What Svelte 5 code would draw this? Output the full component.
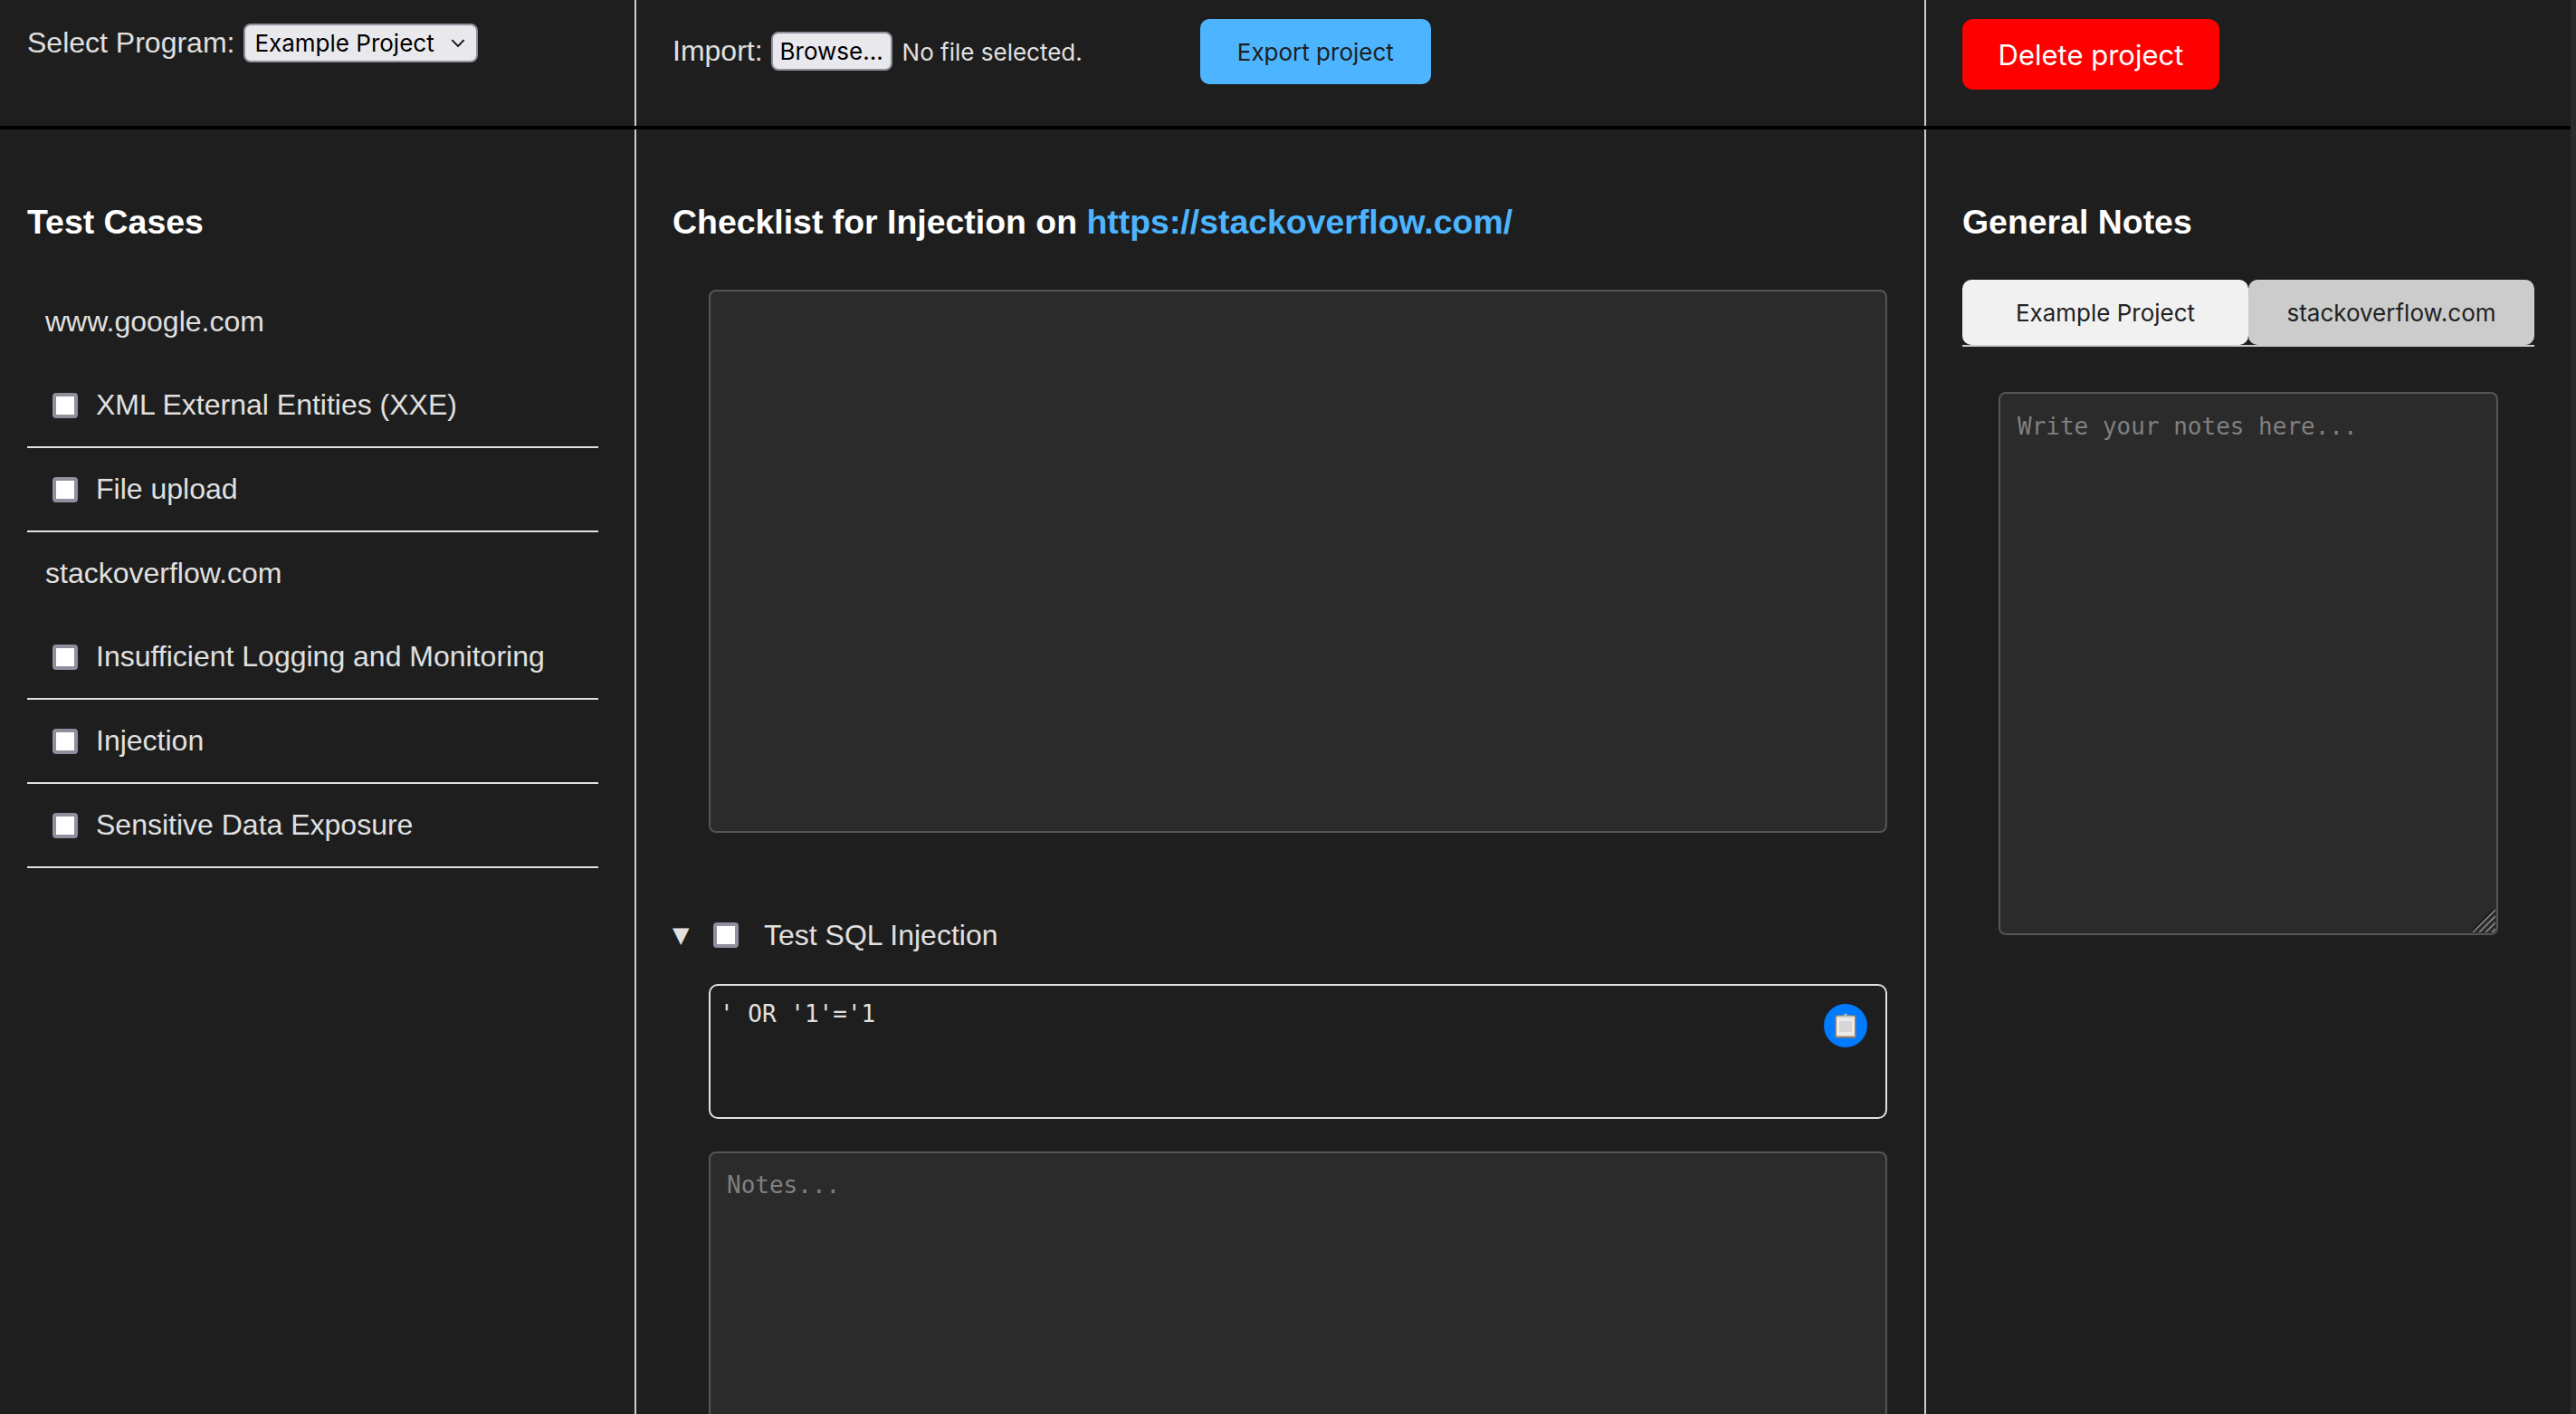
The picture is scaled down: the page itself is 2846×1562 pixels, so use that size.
<script>
  const sections = [
    { host: 'www.google.com', items: ['XML External Entities (XXE)', 'File upload'] },
    { host: 'stackoverflow.com', items: ['Insufficient Logging and Monitoring', 'Injection', 'Sensitive Data Exposure'] }
  ];
</script>

<div class="page">
  <div class="content">
    <header class="top">
      <div class="cell left">
        <label class="program" for="program">Select Program:</label>
        <span class="select-wrap">
          <select id="program"><option>Example Project</option></select>
          <svg class="chevron" viewBox="0 0 12 8" aria-hidden="true"><path d="M1 1.5 6 6.5 11 1.5" fill="none" stroke="#111" stroke-width="1.4"/></svg>
        </span>
      </div>
      <div class="cell middle">
        <span class="import">Import:</span>
        <button class="browse">Browse...</button>
        <span class="nofile">No file selected.</span>
        <button class="export">Export project</button>
      </div>
      <div class="cell right">
        <button class="delete">Delete project</button>
      </div>
    </header>

    <main class="columns">
      <section class="col left">
        <h3>Test Cases</h3>
        <div class="list">
          {#each sections as s}
            <div class="host">{s.host}</div>
            {#each s.items as item}
              <label class="item"><input type="checkbox" /><span>{item}</span></label>
            {/each}
          {/each}
        </div>
      </section>

      <section class="col middle">
        <h3>Checklist for Injection on <a href="#top">https://stackoverflow.com/</a></h3>
        <textarea class="desc" readonly></textarea>
        <div class="check">
          <span class="caret">▼</span>
          <input type="checkbox" />
          <span>Test SQL Injection</span>
        </div>
        <div class="code">
          <pre>' OR '1'='1</pre>
          <button class="copy" aria-label="Copy">
            <svg viewBox="0 0 24 28" width="24" height="28" aria-hidden="true">
              <circle cx="12" cy="2.5" r="2" fill="#a9bfd6"/>
              <rect x="0.5" y="2.5" width="23" height="25" rx="1" fill="#a5835a"/>
              <rect x="2" y="4" width="20" height="21.5" fill="#ececec"/>
              <rect x="4" y="3" width="16" height="2" fill="#c8c4bb"/>
              <rect x="5" y="9" width="14" height="12" fill="#d6d6d6"/>
            </svg>
          </button>
        </div>
        <textarea class="notes" placeholder="Notes..."></textarea>
      </section>

      <section class="col right">
        <h3>General Notes</h3>
        <div class="tabs">
          <button class="tab active">Example Project</button>
          <button class="tab">stackoverflow.com</button>
        </div>
        <div class="general-wrap">
          <textarea class="general" placeholder="Write your notes here..."></textarea>
          <svg class="grip" viewBox="0 0 26 26" aria-hidden="true">
            <path d="M1 25 25 1" stroke="#1a1a1a" stroke-width="4"/>
            <path d="M1 26 26 1M8 26 26 8M15 26 26 15M22 26 26 22" stroke="#8a8a8a" stroke-width="1.6"/>
          </svg>
        </div>
      </section>
    </main>
  </div>
  <div class="gutter"></div>
</div>

<style>
  :global(body) {
    margin: 0;
    background: #1e1e1e;
    overflow: hidden;
  }
  .page {
    display: flex;
    height: 100vh;
    overflow: hidden;
    font-family: "Liberation Sans", Arial, sans-serif;
    color: #e0e0e0;
    background: #1e1e1e;
  }
  .content {
    flex: 1;
    min-width: 0;
    display: flex;
    flex-direction: column;
  }
  .gutter {
    width: 6px;
    background: #2b2b2b;
  }
  .top,
  .columns {
    display: grid;
    grid-template-columns: 703px 1425px 712px;
  }
  .top {
    height: 143px;
    box-sizing: border-box;
    border-bottom: 4px solid #000;
  }
  .columns {
    flex: 1;
    min-height: 0;
  }
  .cell,
  .col {
    box-sizing: border-box;
    padding-left: 30px;
  }
  .cell.left,
  .cell.middle,
  .col.left,
  .col.middle {
    border-right: 2px solid #ccc;
  }
  .cell.middle,
  .col.middle {
    padding-left: 40px;
  }
  .cell.right,
  .col.right {
    padding-left: 40px;
  }

  .cell {
    display: flex;
    align-items: flex-start;
    font-size: 32px;
  }
  .program {
    padding-top: 29px;
  }
  .select-wrap {
    position: relative;
    margin: 26px 0 0 10px;
    display: block;
  }
  select {
    appearance: none;
    display: block;
    width: 259px;
    height: 43px;
    box-sizing: border-box;
    padding: 0 0 0 10px;
    border: 2px solid #8f8f9d;
    border-radius: 8px;
    background: #e9e9ed;
    color: #000;
    font: 26px Inter, sans-serif;
  }
  .chevron {
    position: absolute;
    right: 14px;
    top: 16px;
    width: 16px;
    height: 11px;
  }
  .import {
    padding-top: 38px;
    font-size: 32px;
  }
  .browse {
    margin: 35px 0 0 9px;
    width: 134px;
    height: 43px;
    box-sizing: border-box;
    padding: 0;
    border: 2px solid #8f8f9d;
    border-radius: 8px;
    background: #e9e9ed;
    color: #000;
    font: 26px Inter, sans-serif;
  }
  .nofile {
    margin: 42px 0 0 11px;
    font: 26px Inter, sans-serif;
    color: #e0e0e0;
  }
  .export {
    margin: 21px 0 0 130px;
    width: 255px;
    height: 72px;
    border: 0;
    border-radius: 10px;
    background: #4db5ff;
    color: #1e1e1e;
    font: 26px Inter, sans-serif;
  }
  .delete {
    margin-top: 21px;
    width: 284px;
    height: 78px;
    border: 0;
    border-radius: 12px;
    background: #f00;
    color: #fff;
    font: 31px Inter, sans-serif;
  }

  h3 {
    margin: 81px 0 0;
    font-size: 37.44px;
    font-weight: 700;
    line-height: 43px;
    color: #fff;
  }
  a {
    color: #4db5ff;
    text-decoration: none;
  }
  .list {
    margin-top: 43px;
    width: 631px;
  }
  .host {
    height: 92px;
    box-sizing: border-box;
    display: flex;
    align-items: center;
    padding: 0 0 2px 20px;
    font-size: 32px;
  }
  .item {
    height: 93px;
    box-sizing: border-box;
    display: flex;
    align-items: center;
    border-bottom: 2px solid #e0e0e0;
    font-size: 32px;
  }
  input[type="checkbox"] {
    appearance: none;
    flex: none;
    width: 28px;
    height: 28px;
    margin: 0;
    box-sizing: border-box;
    border: 4px solid #8f8f9d;
    border-radius: 4px;
    background: #fff;
  }
  .item input {
    margin: 0 20px 0 28px;
  }

  .desc,
  .notes,
  .general {
    display: block;
    box-sizing: border-box;
    resize: none;
    border: 2px solid #555;
    border-radius: 8px;
    background: #2b2b2b;
    color: #e0e0e0;
    font: 26px "DejaVu Sans Mono", monospace;
    padding: 20px 18px;
    outline: none;
  }
  textarea::placeholder {
    color: #808080;
    opacity: 1;
  }
  .desc {
    margin: 53px 0 0 40px;
    width: 1302px;
    height: 600px;
  }
  .check {
    margin-top: 90px;
    display: flex;
    align-items: center;
    font-size: 32px;
    height: 46px;
  }
  .caret {
    width: 45px;
    font-size: 24px;
    color: #e0e0e0;
    font-family: "DejaVu Sans", sans-serif;
  }
  .check input {
    margin-right: 28px;
  }
  .code {
    position: relative;
    margin: 31px 0 0 40px;
    width: 1302px;
    height: 149px;
    box-sizing: border-box;
    border: 2px solid #e0e0e0;
    border-radius: 10px;
    background: #1e1e1e;
  }
  pre {
    margin: 0;
    padding: 16px 10px;
    font: 26px "DejaVu Sans Mono", monospace;
    color: #e0e0e0;
  }
  .copy {
    position: absolute;
    top: 20px;
    right: 20px;
    width: 48px;
    height: 48px;
    padding: 0;
    border: 0;
    border-radius: 50%;
    background: #007bff;
    display: flex;
    align-items: center;
    justify-content: center;
  }
  .notes {
    margin: 36px 0 0 40px;
    width: 1302px;
    height: 600px;
  }

  .tabs {
    margin-top: 42px;
    width: 632px;
    display: flex;
    border-bottom: 2px solid #ccc;
  }
  .tab {
    flex: 1;
    height: 72px;
    padding: 0;
    border: 0;
    border-radius: 10px;
    background: #ccc;
    color: #222;
    font: 26px Inter, sans-serif;
  }
  .tab.active {
    background: #f1f1f1;
  }
  .general-wrap {
    position: relative;
    margin: 50px 0 0 40px;
    width: 552px;
  }
  .general {
    width: 552px;
    height: 600px;
    padding: 21px 18px 20px 19px;
  }
  .grip {
    position: absolute;
    right: 3px;
    bottom: 3px;
    width: 26px;
    height: 26px;
  }
</style>
